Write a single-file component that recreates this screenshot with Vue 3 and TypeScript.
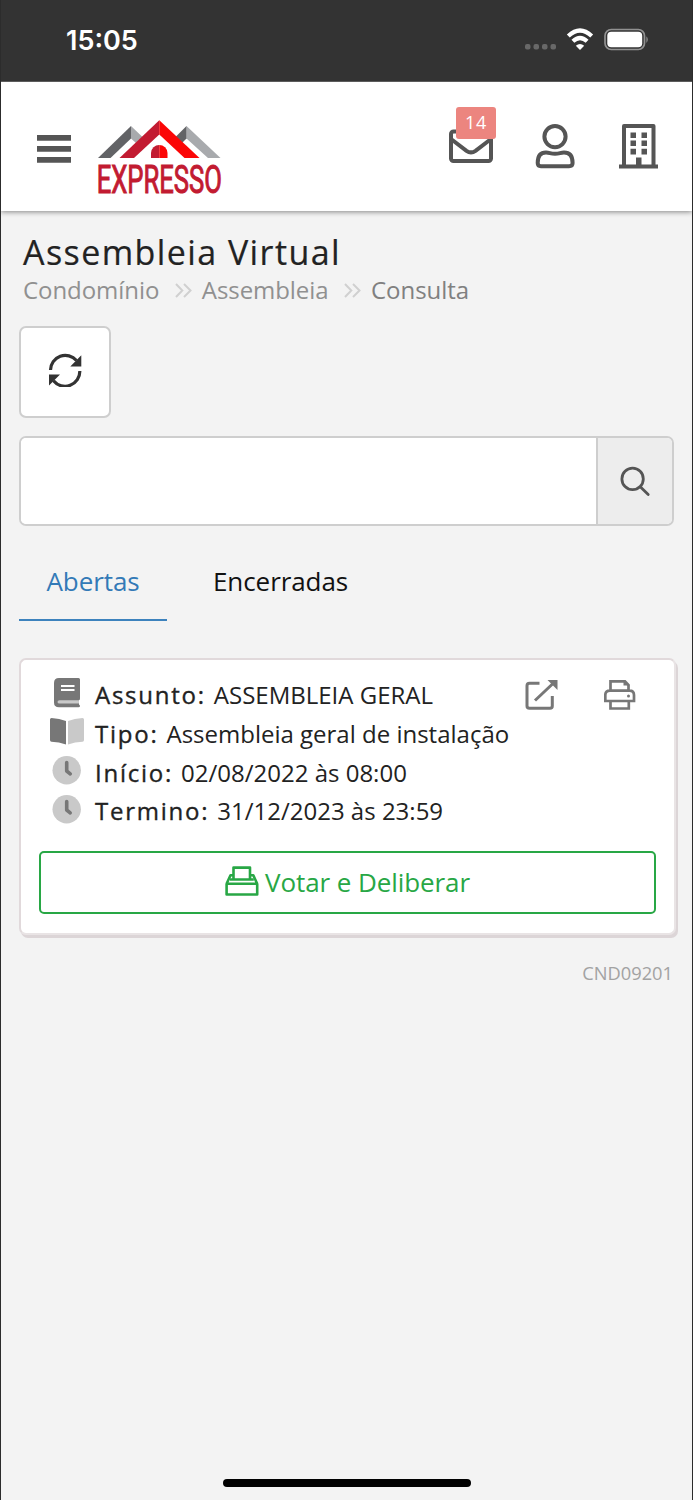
<script setup lang="ts">
import { ref } from 'vue'

interface Detail {
  icon: 'book' | 'open' | 'clock'
  label: string
  value: string
}

const details: Detail[] = [
  { icon: 'book', label: 'Assunto:', value: 'ASSEMBLEIA GERAL' },
  { icon: 'open', label: 'Tipo:', value: 'Assembleia geral de instalação' },
  { icon: 'clock', label: 'Início:', value: '02/08/2022 às 08:00' },
  { icon: 'clock', label: 'Termino:', value: '31/12/2023 às 23:59' },
]
const tab = ref<'open' | 'closed'>('open')
const query = ref('')
</script>

<template>
  <div class="phone">
    <div class="status">
      <span class="time">15:05</span>
      <svg class="signals" width="126" height="26" viewBox="0 0 126 26">
        <g fill="#686868">
          <rect x="1" y="16" width="5.500" height="5.500" rx="2" />
          <rect x="9.500" y="16" width="5.500" height="5.500" rx="2" />
          <rect x="18" y="16" width="5.500" height="5.500" rx="2" />
          <rect x="26.500" y="16" width="5.500" height="5.500" rx="2" />
        </g>
        <g fill="none" stroke="#fff" stroke-width="4.200">
          <path d="M44.300 8Q56 -3 67.700 8" />
          <path d="M48.900 13.300Q56 6.800 63.100 13.300" />
        </g>
        <path fill="#fff" d="M51.800 17.800Q56 14 60.200 17.800L56 22Z" />
        <rect x="81" y="1.500" width="39.500" height="20" rx="6.200" fill="none" stroke="#929292" stroke-width="1.700" />
        <rect x="83.300" y="3.700" width="34.900" height="15.600" rx="4" fill="#fff" />
        <path fill="#888" d="M122.300 8.300Q125.500 11.500 122.300 15Z" />
      </svg>
    </div>

    <header class="topbar">
      <svg class="menu" width="34" height="28" viewBox="0 0 34 28">
        <path fill="#555" d="M0 0H34V5.700H0ZM0 11H34V16.700H0ZM0 22H34V27.700H0Z" />
      </svg>
      <svg class="logo" width="130" height="80" viewBox="94 119 130 80">
        <path fill="#626366" d="M98 158L131 126V138.500L110.500 158Z" />
        <path fill="#a8aaad" d="M131 126L142.500 137L136 143L131 138.500ZM186.500 126L220.500 158H208L186.500 138.500Z" />
        <path fill="#626366" d="M186.500 126V138.500L182 143L175.500 137Z" />
        <path fill="#c21b31" d="M159.300 120.300V134.500L134 158H119.500Z" />
        <path fill="#fb0606" d="M159.300 120.300L199.500 158H184.500L159.300 134.500Z" />
        <path fill="#c21b31" d="M159.300 145A8.200 8.200 0 0 0 151 153V158H159.300Z" />
        <path fill="#fb0606" d="M159.300 145A8.200 8.200 0 0 1 167.500 153V158H159.300Z" />
        <text x="0" y="0" transform="translate(96.700 192.500) scale(0.617 1)" textLength="203" lengthAdjust="spacingAndGlyphs" font-size="39.500" stroke="#c21b31" stroke-width="1.100" fill="#c21b31">EXPRESSO</text>
      </svg>
      <div class="mail">
        <svg width="46" height="36" viewBox="448 128 46 36">
          <g fill="none" stroke="#555" stroke-width="4">
            <rect x="451" y="131.500" width="40" height="29.500" rx="2.500" />
            <path d="M451 139L466.500 150.800Q471 154 475.500 150.800L491 139" />
          </g>
        </svg>
        <span class="badge">14</span>
      </div>
      <svg class="user" width="40" height="46" viewBox="535 123 40 46">
        <g fill="none" stroke="#555" stroke-width="4">
          <circle cx="555" cy="136.600" r="10.600" />
          <path d="M541 166.200H569Q572.600 166.200 572.600 163Q572.600 152.600 564 152.600C560.500 152.600 559.500 153.800 555 153.800S549.500 152.600 546 152.600Q537.700 152.600 537.700 163Q537.700 166.200 541 166.200Z" />
        </g>
      </svg>
      <svg class="building" width="40" height="46" viewBox="619 123 40 46">
        <path fill="none" stroke="#555" stroke-width="4" stroke-linejoin="round" d="M624 166V126H653.500V166" />
        <path fill="#555" d="M619 164.500H658V168.500H619ZM636 157.500H641.500V166H636ZM630.500 132.500H636V138H630.500ZM641.500 132.500H647V138H641.500ZM630.500 140.500H636V146H630.500ZM641.500 140.500H647V146H641.500ZM630.500 148.800H636V154.500H630.500ZM641.500 148.800H647V154.500H641.500Z" />
      </svg>
    </header>

    <main>
      <h1>Assembleia Virtual</h1>
      <nav class="crumbs">
        <span>Condomínio</span>
        <svg width="17" height="15" viewBox="0 0 17 15"><path d="M1 1L7.300 7.500L1 14M9 1L15.500 7.500L9 14" /></svg>
        <span>Assembleia</span>
        <svg width="17" height="15" viewBox="0 0 17 15"><path d="M1 1L7.300 7.500L1 14M9 1L15.500 7.500L9 14" /></svg>
        <span class="current">Consulta</span>
      </nav>

      <button class="refresh" aria-label="Atualizar">
        <svg width="34" height="34" viewBox="48 352 34 34">
          <path fill="none" stroke="#333" stroke-width="3.200" d="M50.500 369A14.800 14.800 0 0 1 76.500 359.500M79.800 370A14.800 14.800 0 0 1 53.500 379.800" />
          <path fill="#333" d="M81.300 354.300V365.500H70.300ZM49 384.500V373.500H60Z" />
        </svg>
      </button>

      <div class="search">
        <input v-model="query" aria-label="Pesquisar" />
        <button aria-label="Buscar">
          <svg width="32" height="32" viewBox="620 465 32 32">
            <g fill="none" stroke="#555" stroke-width="2.800" stroke-linecap="round">
              <circle cx="632.600" cy="478.900" r="10.700" />
              <path d="M640.500 487L648.200 494.500" />
            </g>
          </svg>
        </button>
      </div>

      <div class="tabs">
        <button :class="{ active: tab === 'open' }" @click="tab = 'open'">Abertas</button>
        <button :class="{ active: tab === 'closed' }" @click="tab = 'closed'">Encerradas</button>
      </div>

      <section class="card">
        <div class="info">
          <div class="rows">
            <div v-for="d in details" :key="d.label" class="row">
              <span class="ico">
                <svg v-if="d.icon === 'book'" width="26" height="30" viewBox="0 0 26 30">
                  <path fill="#777" d="M5 0H24.500Q26 0 26 1.500V20.500Q26 22 25 22.300V26.500Q26 27 26 28Q26 29.300 24.500 29.300H5Q0 29.300 0 24.500V5Q0 0 5 0Z" />
                  <path fill="#c9c9c9" d="M5.500 22.300H25V25.500H5.500Q3.500 25.500 3.500 24Q3.500 22.300 5.500 22.300Z" />
                  <path fill="#fff" d="M7 7H20.500V9H7ZM7 11H20.500V13H7Z" />
                </svg>
                <svg v-else-if="d.icon === 'open'" width="34" height="27" viewBox="0 0 34 27">
                  <path fill="#777" d="M1.500 0Q9.500 .3 16 3V26.500Q9 24 1.500 23.800Q0 23.800 0 22V1.500Q0 0 1.500 0Z" />
                  <path fill="#c9c9c9" d="M32.500 0Q24.500 .3 18 3V26.500Q25 24 32.500 23.800Q34 23.800 34 22V1.500Q34 0 32.500 0Z" />
                </svg>
                <svg v-else width="29" height="29" viewBox="0 0 29 29">
                  <circle cx="14.700" cy="14.300" r="14.200" fill="#c9c9c9" />
                  <path fill="none" stroke="#777" stroke-width="3.600" stroke-linecap="round" stroke-linejoin="round" d="M14.700 6.500V15L18.200 17.800" />
                </svg>
              </span>
              <b>{{ d.label }}</b><span>{{ d.value }}</span>
            </div>
          </div>
          <div class="actions">
            <svg width="34" height="32" viewBox="525 679 34 32">
              <path fill="none" stroke="#777" stroke-width="3" d="M539.500 683.300H529.500Q527 683.300 527 685.800V706Q527 708.300 529.500 708.300H550Q552.300 708.300 552.300 706V696M535 700.500L553 683.500" />
              <path fill="#777" d="M547.500 680H557.500V690Z" />
            </svg>
            <svg width="32" height="32" viewBox="604 679 32 32">
              <g fill="none" stroke="#777" stroke-width="2.700">
                <path d="M610.500 691V681.300H625L628.500 685V691M610 701H605.300V695Q605.300 690.600 610 690.600H629.500Q634 690.600 634 695V701H629M610.500 701V708.500H628.800V701M608 701H631" />
              </g>
              <path fill="#777" d="M623.500 680L630 686V685.500H623.500Z" />
              <circle cx="628.500" cy="696" r="1.500" fill="#777" />
            </svg>
          </div>
        </div>
        <button class="vote">
          <svg width="34" height="31" viewBox="225 866 34 31">
            <g fill="none" stroke="#28a745" stroke-width="2.600" stroke-linejoin="round">
              <path d="M226.600 883.800V894.500H257.200V883.800ZM226.600 883.800L230.500 875.200H233.500M250 875.200H253.300L257.200 883.800" />
              <path d="M233.500 879.500V867.600H250V879.500M230 879.500H253.800" />
            </g>
          </svg>
          <span>Votar e Deliberar</span>
        </button>
      </section>
      <div class="code">CND09201</div>
    </main>
    <div class="home"></div>
  </div>
</template>

<style>
html,
body {
  margin: 0;
  background: #f3f3f3;
}
</style>

<style scoped>
* {
  box-sizing: border-box;
}
svg {
  display: block;
  flex: none;
}
button {
  font: inherit;
  padding: 0;
  margin: 0;
  border: 0;
  background: none;
  color: inherit;
}
.phone {
  width: 693px;
  height: 1500px;
  display: flex;
  flex-direction: column;
  border: solid #2c2c2c;
  border-width: 0 1px;
  background: #f3f3f3;
  font-family: 'Open Sans', 'Noto Sans', sans-serif;
  color: #222;
  overflow: hidden;
}
.status {
  height: 82px;
  flex: none;
  background: #333;
  border-bottom: 1px solid #5c5c5c;
  display: flex;
  justify-content: space-between;
  padding: 25px 42px 0 65px;
}
.time {
  font: 600 27px/32px Inter, sans-serif;
  color: #fff;
}
.signals {
  margin-top: 3px;
}
.topbar {
  height: 129px;
  flex: none;
  background: #fff;
  box-shadow: 0 1px 5px rgba(0, 0, 0, 0.45);
  clip-path: inset(0 0 -10px 0);
  display: flex;
  align-items: flex-start;
  padding-left: 36px;
}
.menu {
  margin-top: 53px;
}
.logo {
  margin: 37px 0 0 23px;
  font-family: 'Roboto', sans-serif;
  overflow: visible;
}
.mail {
  position: relative;
  margin: 46px 0 0 224px;
}
.badge {
  position: absolute;
  left: 8px;
  top: -21px;
  width: 40px;
  height: 32px;
  border-radius: 3px;
  background: #ec857f;
  color: #fff;
  font-size: 18px;
  line-height: 31px;
  letter-spacing: 0.6px;
  text-align: center;
}
.user {
  margin: 41px 0 0 41px;
}
.building {
  margin: 41px 0 0 44px;
}
main {
  flex: 1;
  padding: 24px 14px 0 18px;
}
h1 {
  margin: 0 0 0 4px;
  font-size: 34px;
  line-height: 34px;
  font-weight: 400;
  letter-spacing: 1.42px;
  white-space: nowrap;
  -webkit-text-stroke: 0.2px #222;
}
.crumbs {
  display: flex;
  align-items: center;
  height: 30px;
  margin: 6px 0 0 4px;
  font-size: 24px;
  line-height: 30px;
  letter-spacing: -0.06px;
  color: #909090;
}
.crumbs svg {
  margin: 1px 10px 0 15.5px;
  fill: none;
  stroke: #d0d0d0;
  stroke-width: 2;
}
.crumbs .current {
  color: #808080;
}
.refresh {
  display: grid;
  place-items: center;
  width: 92px;
  height: 92px;
  padding-bottom: 4px;
  margin-top: 20.5px;
  background: #fff;
  border: 2px solid #cecece;
  border-radius: 7px;
}
.search {
  display: flex;
  width: 655px;
  height: 90px;
  margin-top: 18.5px;
  border: 2px solid #cecece;
  border-radius: 7px;
  overflow: hidden;
  background: #fff;
}
.search input {
  flex: 1;
  min-width: 0;
  border: 0;
  padding: 0 20px;
  font: 26px 'Open Sans', sans-serif;
  outline: 0;
}
.search button {
  width: 76px;
  padding-left: 1px;
  display: grid;
  place-items: center;
  border-left: 2px solid #cecece;
  background: #ededed;
}
.tabs {
  display: flex;
  height: 78px;
  margin-top: 17px;
  gap: 18.5px;
  font-size: 26px;
}
.tabs button {
  padding: 0 28px 0 27.5px;
  height: 78px;
  width: 148px;
  white-space: nowrap;
  text-align: left;
  letter-spacing: -0.08px;
  color: #111;
  border-bottom: 2px solid transparent;
}
.tabs button.active {
  color: #337ab7;
  border-color: #3c82bd;
}
.card {
  width: 657px;
  height: 277px;
  margin-top: 37px;
  padding: 16px 18px 0;
  background: #fff;
  border: 2px solid #e1d9db;
  border-right-color: #e9e4e5;
  border-bottom-color: #e9e4e5;
  border-radius: 7px;
  box-shadow: 2px 3px 0 #dcd5d7;
}
.info {
  display: flex;
  justify-content: space-between;
}
.row {
  display: flex;
  height: 38.8px;
  font-size: 24px;
  line-height: 37px;
  white-space: nowrap;
}
.ico {
  width: 56px;
  height: 34px;
  display: grid;
  place-items: center;
  padding-right: 1px;
}
.row b {
  font-weight: 400;
  -webkit-text-stroke: 0.35px #222;
  letter-spacing: 1.75px;
  margin-right: 8px;
}
.actions {
  display: flex;
  gap: 45px;
  padding: 3px 20px 0 0;
}
.vote {
  display: flex;
  align-items: center;
  justify-content: center;
  width: 617px;
  height: 63px;
  margin-top: 20px;
  gap: 6px;
  border: 2px solid #28a745;
  border-radius: 5px;
  font-size: 26px;
  color: #28a745;
}
.vote span {
  margin-top: -2px;
  letter-spacing: -0.08px;
}
.vote svg {
  margin-top: -3px;
}
.code {
  margin: 24px 5px 0 0;
  font-size: 18.3px;
  line-height: 28px;
  text-align: right;
  color: #a2a2a2;
}
.home {
  width: 248px;
  height: 8px;
  flex: none;
  margin: 0 0 13px 222px;
  border-radius: 4px;
  background: #000;
}
</style>
